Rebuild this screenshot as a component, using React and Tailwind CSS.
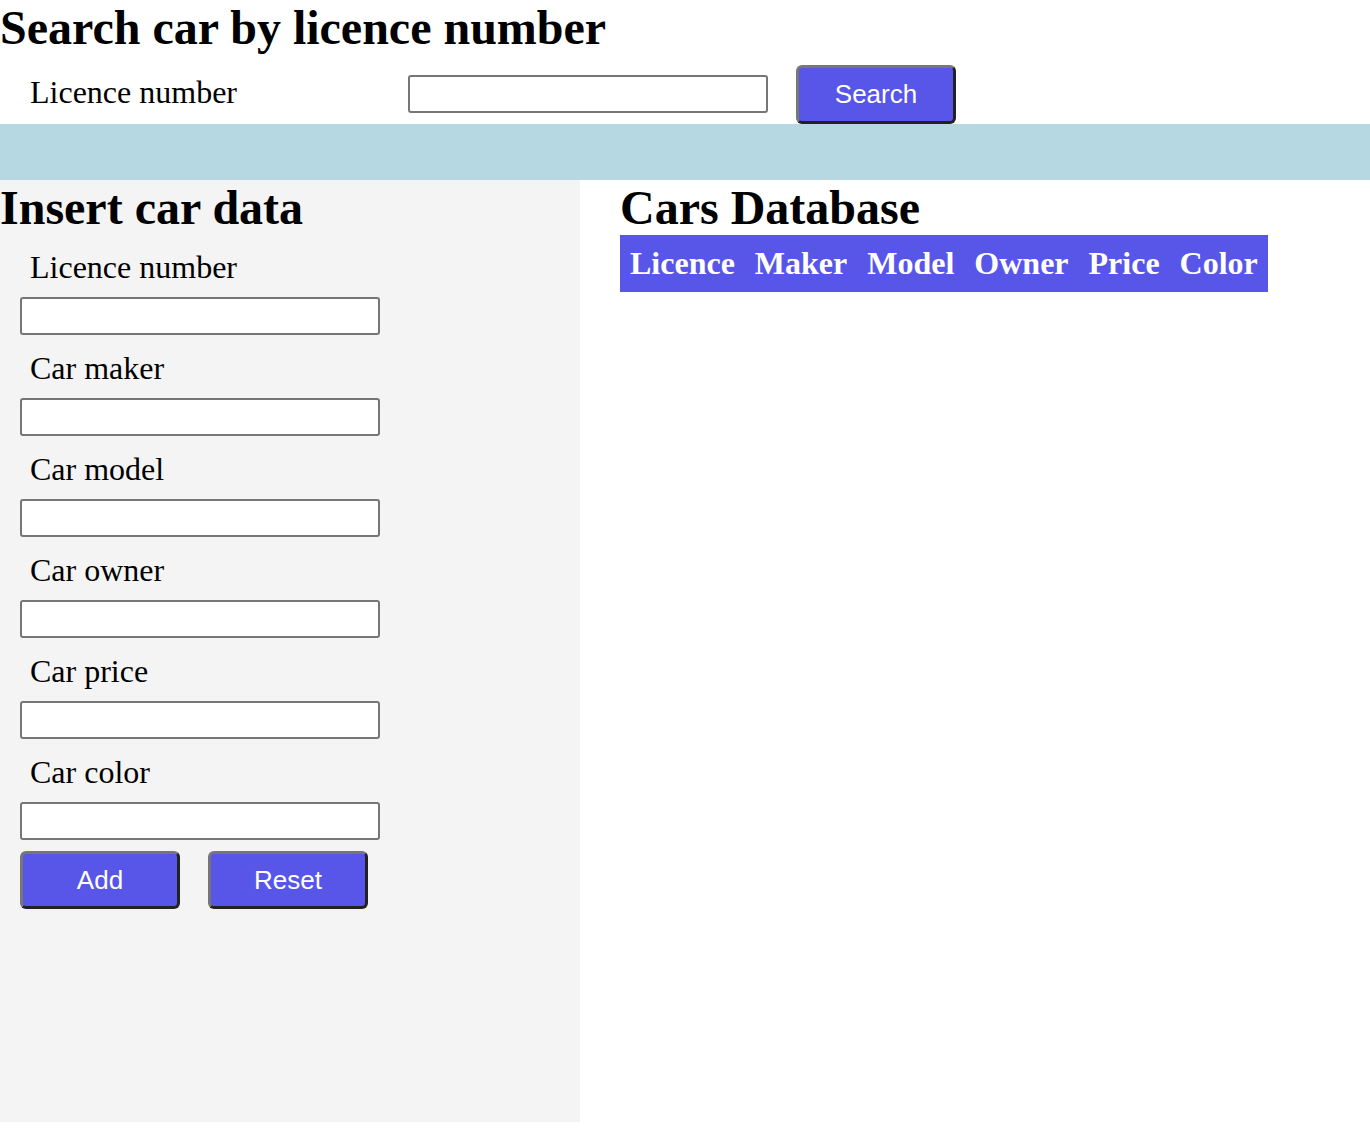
// App.jsx
import React from 'react';

// Form fields
const fields = [
  { id: "licence", label: "Licence number" },
  { id: "maker", label: "Car maker" },
  { id: "model", label: "Car model" },
  { id: "owner", label: "Car owner" },
  { id: "price", label: "Car price" },
  { id: "color", label: "Car color" },
];

const columns = ["Licence", "Maker", "Model", "Owner", "Price", "Color"];

const btnClass =
  "w-[160px] h-[58px] rounded-[6px] border-[3px] border-t-[#767676] border-l-[#767676] border-b-[#222222] border-r-[#222222] bg-[#5856e9] text-white text-[26px] font-['Liberation_Sans',Arial,sans-serif]";

const inputClass =
  "w-[360px] h-[38px] rounded-[3px] border-2 border-[#767676] bg-white px-1 text-[16px]";

const App = () => {
  return (
    <div className="font-['Liberation_Serif','Times_New_Roman',serif] text-black">
      {/* Search */}
      <h1 className="text-[48px] font-bold leading-[55px]">Search car by licence number</h1>
      <div className="flex items-center pt-[10px]">
        <label className="w-[408px] pl-[30px] text-[32px] leading-[37px] pb-[4px]">Licence number</label>
        <input type="text" className={`${inputClass} mb-[1px]`} />
        <button className={`${btnClass} ml-[28px] h-[59px]`}>Search</button>
      </div>

      {/* Band */}
      <div className="h-[56px] bg-[#b6d8e3]" />

      <div className="flex">
        {/* Insert form */}
        <div className="w-[580px] h-[942px] bg-[#f4f4f4]">
          <h1 className="text-[48px] font-bold leading-[55px]">Insert car data</h1>
          <div className="pl-[20px]">
            {fields.map(f => (
              <div key={f.id} className="flex flex-col">
                <label className="pl-[10px] pt-[14px] text-[32px] leading-[37px]">{f.label}</label>
                <input type="text" className={`${inputClass} mt-[11px] mb-[1px]`} />
              </div>
            ))}
            <div className="flex gap-[28px] mt-[10px]">
              <button className={btnClass}>Add</button>
              <button className={btnClass}>Reset</button>
            </div>
          </div>
        </div>

        {/* Table */}
        <div className="pl-[40px]">
          <h1 className="text-[48px] font-bold leading-[55px]">Cars Database</h1>
          <table>
            <thead className="bg-[#5856e9]">
              <tr>
                {columns.map(c => (
                  <th key={c} className="px-[10px] py-[10px] text-[32px] leading-[37px] font-bold text-white">{c}</th>
                ))}
              </tr>
            </thead>
          </table>
        </div>
      </div>
    </div>
  );
};

export default App;
